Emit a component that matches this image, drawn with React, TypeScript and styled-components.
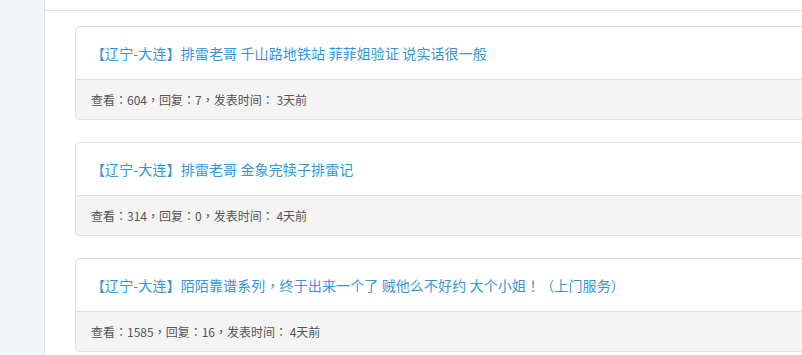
import React from 'react';
import styled, { createGlobalStyle } from 'styled-components';

const GlobalStyle = createGlobalStyle`
  html, body {
    margin: 0;
    padding: 0;
    background: #fff;
    overflow: hidden;
  }
  body {
    font-family: "Noto Sans CJK TC", "Noto Sans CJK SC", "Liberation Sans", sans-serif;
  }
`;

const Page = styled.div`
  display: flex;
  width: 880px;
  height: 355px;
  overflow: hidden;
`;

const Sidebar = styled.aside`
  flex: 0 0 44px;
  background: #f3f6f9;
  border-right: 1px solid #dbe3eb;
`;

const Main = styled.main`
  flex: 1;
  display: flex;
  flex-direction: column;
`;

const TopBar = styled.div`
  height: 10px;
  border-bottom: 1px solid #dbe3eb;
`;

const List = styled.div`
  display: flex;
  flex-direction: column;
  gap: 22px;
  padding: 15px 0 0 30px;
`;

const Card = styled.div`
  border: 1px solid #d9e2ea;
  border-radius: 4px;
  background: #fff;
  overflow: hidden;
`;

const Title = styled.a`
  display: block;
  height: 52px;
  padding: 0 15px;
  box-sizing: border-box;
  line-height: 52px;
  font-size: 14px;
  letter-spacing: 0.12px;
  color: #3596d6;
  text-decoration: none;
  white-space: nowrap;
`;

const Meta = styled.div`
  height: 40px;
  padding: 0 15px;
  box-sizing: border-box;
  border-top: 1px solid #d9e2ea;
  background: #f4f4f4;
  line-height: 39px;
  font-size: 12px;
  color: #555;
  white-space: nowrap;
`;

const POSTS = [
  { title: '【辽宁-大连】排雷老哥 千山路地铁站 菲菲姐验证 说实话很一般', views: 604, replies: 7, time: '3天前' },
  { title: '【辽宁-大连】排雷老哥 金象完犊子排雷记', views: 314, replies: 0, time: '4天前' },
  { title: '【辽宁-大连】陌陌靠谱系列，终于出来一个了 贼他么不好约 大个小姐！（上门服务）', views: 1585, replies: 16, time: '4天前' },
];

export default function App() {
  return (
    <>
      <GlobalStyle />
      <Page>
        <Sidebar />
        <Main>
          <TopBar />
          <List>
            {POSTS.map((p, i) => (
              <Card key={i}>
                <Title href="#">{p.title}</Title>
                <Meta>
                  查看：{p.views}，回复：{p.replies}，发表时间： {p.time}
                </Meta>
              </Card>
            ))}
          </List>
        </Main>
      </Page>
    </>
  );
}
